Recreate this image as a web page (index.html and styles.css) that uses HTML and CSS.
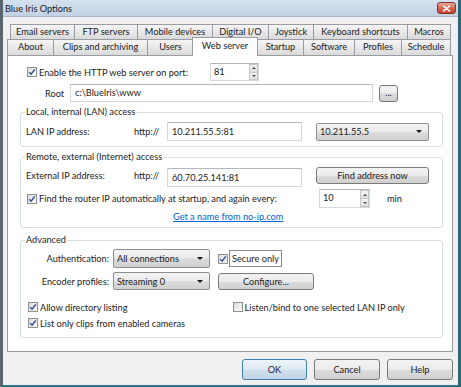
FILE: index.html
```html
<!DOCTYPE html>
<html lang="en">
<head>
    <meta charset="UTF-8">
    <meta name="viewport" content="width=device-width, initial-scale=1.0">
    <title>Blue Iris Options</title>
    <link rel="stylesheet" href="styles.css">
</head>
<body>
    <div class="window">
        <div class="titlebar">
            <span class="title">Blue Iris Options</span>
            <span class="close-btn">
                <svg width="9" height="7" viewBox="0 0 9 7"><path d="M1.5 1 L7.5 6 M7.5 1 L1.5 6" stroke="#fff" stroke-width="1.6" stroke-linecap="round"/></svg>
            </span>
        </div>

        <div class="client">
            <div class="tab-row row-back">
                <div class="tab">Email servers</div>
                <div class="tab">FTP servers</div>
                <div class="tab">Mobile devices</div>
                <div class="tab">Digital I/O</div>
                <div class="tab">Joystick</div>
                <div class="tab">Keyboard shortcuts</div>
                <div class="tab">Macros</div>
            </div>
            <div class="tab-row row-front">
                <div class="tab">About</div>
                <div class="tab">Clips and archiving</div>
                <div class="tab">Users</div>
                <div class="tab selected">Web server</div>
                <div class="tab">Startup</div>
                <div class="tab">Software</div>
                <div class="tab">Profiles</div>
                <div class="tab">Schedule</div>
            </div>

            <div class="panel">
                <div class="row enable-row">
                    <span class="check"><svg width="8" height="8" viewBox="0 0 8 8"><path d="M1.2 4.2 L3.1 6.2 L6.8 1.4" fill="none" stroke="#35508f" stroke-width="1.5"/></svg></span>
                    <span class="enable-label">Enable the HTTP web server on port:</span>
                    <div class="spin port-spin">
                        <span class="spin-value">81</span>
                        <span class="spin-btns"><span class="spin-up"></span><span class="spin-down"></span></span>
                    </div>
                </div>

                <div class="row root-row">
                    <span class="root-label">Root</span>
                    <span class="field root-field">c:\BlueIris\www</span>
                    <button class="btn browse-btn">...</button>
                </div>

                <fieldset class="group lan-group">
                    <legend>Local, internal (LAN) access</legend>
                    <div class="row ip-row">
                        <span class="ip-label">LAN IP address:</span>
                        <span class="http">http://</span>
                        <span class="field ip-field">10.211.55.5:81</span>
                        <span class="combo lan-combo">10.211.55.5</span>
                    </div>
                </fieldset>

                <fieldset class="group wan-group">
                    <legend>Remote, external (Internet) access</legend>
                    <div class="row ip-row wan-row">
                        <span class="ip-label">External IP address:</span>
                        <span class="http">http://</span>
                        <span class="field ip-field">60.70.25.141:81</span>
                        <button class="btn find-btn">Find address now</button>
                    </div>
                    <div class="row router-row">
                        <span class="check"><svg width="8" height="8" viewBox="0 0 8 8"><path d="M1.2 4.2 L3.1 6.2 L6.8 1.4" fill="none" stroke="#35508f" stroke-width="1.5"/></svg></span>
                        <span class="router-label">Find the router IP automatically at startup, and again every:</span>
                        <div class="spin minutes-spin">
                            <span class="spin-value">10</span>
                            <span class="spin-btns"><span class="spin-up"></span><span class="spin-down"></span></span>
                        </div>
                        <span class="min-label">min</span>
                    </div>
                    <div class="link-row"><a href="#" class="link">Get a name from no-ip.com</a></div>
                </fieldset>

                <fieldset class="group adv-group">
                    <legend>Advanced</legend>
                    <div class="row adv-row">
                        <span class="adv-label">Authentication:</span>
                        <span class="combo adv-combo">All connections</span>
                        <span class="check secure-check"><svg width="8" height="8" viewBox="0 0 8 8"><path d="M1.2 4.2 L3.1 6.2 L6.8 1.4" fill="none" stroke="#35508f" stroke-width="1.5"/></svg></span>
                        <span class="secure-label">Secure only</span>
                    </div>
                    <div class="row adv-row encoder-row">
                        <span class="adv-label">Encoder profiles:</span>
                        <span class="combo adv-combo">Streaming 0</span>
                        <button class="btn configure-btn">Configure...</button>
                    </div>
                    <div class="row opt-row">
                        <span class="opt">
                            <span class="check"><svg width="8" height="8" viewBox="0 0 8 8"><path d="M1.2 4.2 L3.1 6.2 L6.8 1.4" fill="none" stroke="#35508f" stroke-width="1.5"/></svg></span>
                            <span class="opt-text">Allow directory listing</span>
                        </span>
                        <span class="opt">
                            <span class="check"></span>
                            <span class="opt-text">Listen/bind to one selected LAN IP only</span>
                        </span>
                    </div>
                    <div class="row opt-row last-opt">
                        <span class="opt">
                            <span class="check"><svg width="8" height="8" viewBox="0 0 8 8"><path d="M1.2 4.2 L3.1 6.2 L6.8 1.4" fill="none" stroke="#35508f" stroke-width="1.5"/></svg></span>
                            <span class="opt-text">List only clips from enabled cameras</span>
                        </span>
                    </div>
                </fieldset>
            </div>

            <div class="footer">
                <button class="btn default ok-btn">OK</button>
                <button class="btn">Cancel</button>
                <button class="btn">Help</button>
            </div>
        </div>
    </div>
</body>
</html>
```

FILE: styles.css
```css
* {
    box-sizing: border-box;
}
body {
    margin: 0;
    font-family: Lato, 'Open Sans', sans-serif;
    font-size: 9.2px;
    color: #222;
    background-color: #f0f0f0;
}
.window {
    width: 461px;
    height: 387px;
    display: flex;
    flex-direction: column;
    border-left: 3px solid #5b6570;
    border-right: 3px solid #2f6577;
    border-bottom: 2px solid #2a7588;
    background-color: #f0f0f0;
}

/* title bar */
.titlebar {
    height: 17px;
    flex: none;
    display: flex;
    align-items: center;
    justify-content: space-between;
    padding: 0 2px;
    background: linear-gradient(#d4e1ee, #c2d2e3);
    border-bottom: 1px solid #a8b6c5;
}
.title {
    color: #1a1a1a;
}
.close-btn {
    width: 19px;
    height: 12px;
    display: flex;
    align-items: center;
    justify-content: center;
    border: 1px solid #8a3526;
    border-radius: 3px;
    background: linear-gradient(#eaa799, #d46a56 50%, #c2432f);
}

.client {
    flex: 1;
    padding: 7px 5px 0 4px;
}

/* tabs */
.tab-row {
    display: grid;
}
.row-back {
    height: 15px;
    margin-left: 3px;
    grid-template-columns: 64px 63px 75px 56px 45px 94px 43px;
}
.row-front {
    height: 16px;
    grid-template-columns: 46px 94px 46px 64px 46px 51px 47px 49px;
}
.tab {
    margin-right: -1px;
    border: 1px solid #9a9ea4;
    border-bottom: none;
    background: linear-gradient(#f5f5f5, #e8e8e8 50%, #dadada);
    text-align: center;
    line-height: 14px;
    white-space: nowrap;
}
.tab.selected {
    position: relative;
    z-index: 1;
    margin: -2px -1px -1px -1px;
    background: #fff;
    line-height: 16px;
}

.panel {
    height: 297px;
    padding-top: 7px;
    border: 1px solid #9a9ea4;
    background-color: #fff;
}

/* common controls */
.row {
    display: flex;
    align-items: center;
}
.check {
    width: 10px;
    height: 10px;
    flex: none;
    display: flex;
    align-items: center;
    justify-content: center;
    border: 1px solid #8e8f8f;
    background: linear-gradient(135deg, #dcdcdc, #fbfbfb);
}
.field {
    height: 19px;
    padding-left: 4px;
    line-height: 17px;
    border: 1px solid #d5d9de;
    border-top-color: #b3b7bd;
    background-color: #fff;
    white-space: nowrap;
}
.spin {
    height: 18px;
    display: flex;
    border: 1px solid #d5d9de;
    border-top-color: #b3b7bd;
    background-color: #fff;
}
.spin-value {
    flex: 1;
    padding-left: 3px;
    line-height: 16px;
}
.spin-btns {
    width: 9px;
    display: flex;
    flex-direction: column;
}
.spin-up,
.spin-down {
    flex: 1;
    display: flex;
    align-items: center;
    justify-content: center;
    border: 1px solid #c3c8ce;
    background: linear-gradient(#f4f4f4, #dedede);
}
.spin-down {
    border-top: none;
}
.spin-up::after {
    content: "";
    border-left: 2px solid transparent;
    border-right: 2px solid transparent;
    border-bottom: 2px solid #4a4a4a;
}
.spin-down::after {
    content: "";
    border-left: 2px solid transparent;
    border-right: 2px solid transparent;
    border-top: 2px solid #4a4a4a;
}
.combo {
    display: flex;
    align-items: center;
    justify-content: space-between;
    padding: 0 6px 0 3px;
    border: 1px solid #8e8f8f;
    border-radius: 2px;
    background: linear-gradient(#f3f3f3, #ebebeb 50%, #dddddd 50%, #d0d0d0);
    white-space: nowrap;
}
.combo::after {
    content: "";
    border-left: 3px solid transparent;
    border-right: 3px solid transparent;
    border-top: 3px solid #1a1a1a;
}
.btn {
    padding: 0;
    font: inherit;
    color: #222;
    border: 1px solid #7a7a7a;
    border-radius: 3px;
    background: linear-gradient(#f3f3f3, #ebebeb 50%, #dddddd 50%, #d0d0d0);
    white-space: nowrap;
}
.btn.default {
    border-color: #3f7fae;
    background: linear-gradient(#edf5fb, #dde9f3 50%, #cfdeeb 50%, #c4d6e6);
}

/* group boxes */
.group {
    margin: 4px 9px 0 12px;
    padding: 4px 5px 4px 5px;
    min-width: 0;
    border: 1px solid #d5dfe5;
    border-radius: 3px;
}
.group legend {
    margin-left: -1px;
    padding: 0 1px;
    line-height: 12px;
}

/* top rows */
.enable-row {
    height: 18px;
    padding-left: 19px;
}
.enable-label {
    width: 171px;
    margin-left: 2px;
}
.port-spin {
    width: 49px;
}
.root-row {
    height: 18px;
    margin-top: 3px;
    padding-left: 37px;
}
.root-label {
    width: 25px;
}
.root-field {
    width: 303px;
    height: 18px;
    line-height: 16px;
}
.browse-btn {
    width: 19px;
    height: 17px;
    margin-left: 6px;
    line-height: 10px;
}

/* LAN / WAN */
.lan-group {
    padding-bottom: 5px;
}
.ip-row {
    height: 19px;
}
.ip-label {
    width: 108px;
}
.http {
    width: 33px;
}
.ip-field {
    width: 135px;
}
.lan-combo {
    width: 113px;
    height: 18px;
    margin-left: 14px;
}
.wan-row {
    height: 20px;
    align-items: flex-start;
}
.wan-row .ip-label,
.wan-row .http {
    line-height: 17px;
}
.wan-row .ip-field {
    margin-top: 1px;
}
.find-btn {
    width: 113px;
    height: 17px;
    margin-left: 14px;
}
.router-row {
    height: 19px;
    margin-top: 2px;
    padding-left: 1px;
}
.router-label {
    width: 280px;
    margin-left: 2px;
    white-space: nowrap;
}
.minutes-spin {
    width: 51px;
    height: 19px;
}
.min-label {
    margin-left: 17px;
}
.link-row {
    margin-top: 3px;
    padding-left: 147px;
    line-height: 12px;
}
.link {
    color: #0066cc;
}

/* advanced */
.adv-group {
    margin-top: 6px;
    padding: 3px 5px 8px 5px;
}
.adv-row {
    height: 19px;
}
.adv-label {
    width: 83px;
    margin-right: 4px;
    text-align: right;
}
.adv-combo {
    width: 97px;
    height: 19px;
}
.secure-check {
    margin-left: 8px;
}
.secure-label {
    height: 17px;
    margin-left: 1px;
    padding: 0 2px;
    line-height: 15px;
    border: 1px solid #8a8a8a;
}
.encoder-row {
    height: 18px;
    margin-top: 4px;
}
.encoder-row .adv-combo {
    height: 18px;
}
.configure-btn {
    width: 96px;
    height: 17px;
    margin-left: 8px;
}
.opt-row {
    height: 12px;
    margin-top: 11px;
    padding-left: 2px;
}
.last-opt {
    margin-top: 4px;
}
.opt {
    width: 205px;
    display: flex;
    align-items: center;
}
.opt-text {
    margin-left: 2px;
    white-space: nowrap;
}

/* bottom buttons */
.footer {
    display: flex;
    justify-content: flex-end;
    gap: 7px;
    padding-top: 7px;
}
.footer .btn {
    width: 66px;
    height: 21px;
}
.footer .ok-btn {
    width: 65px;
}
```
